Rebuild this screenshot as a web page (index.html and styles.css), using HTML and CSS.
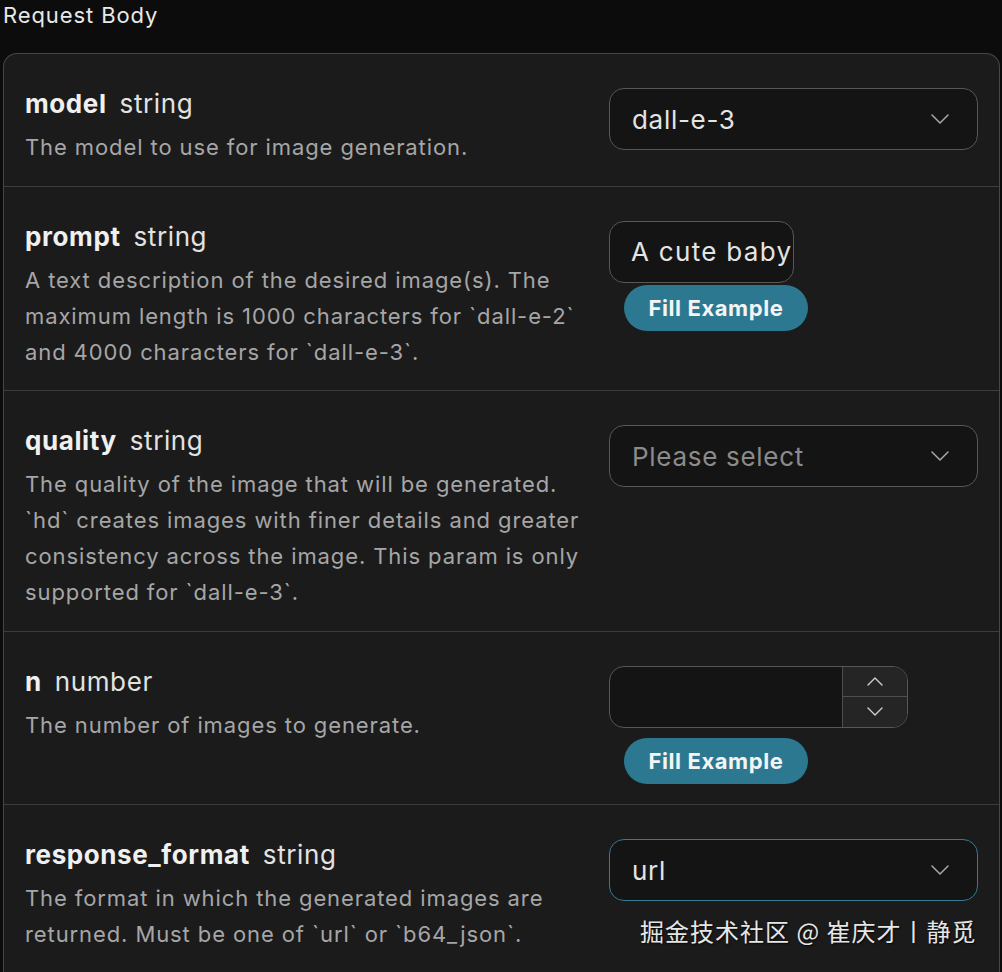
FILE: index.html
```html
<!DOCTYPE html>
<html lang="en">
<head>
<meta charset="utf-8">
<title>Request Body</title>
<link rel="stylesheet" href="styles.css">
</head>
<body>
<div class="page">
  <div class="heading">Request Body</div>
  <div class="card">
    <div class="row">
      <div class="info">
        <div class="title"><span class="name">model</span><span class="type">string</span></div>
        <div class="desc">The model to use for image generation.</div>
      </div>
      <div class="control">
        <div class="select">
          <span class="value">dall-e-3</span>
          <svg class="chev" viewBox="0 0 18 10" width="18" height="10"><path d="M1 1l8 8 8-8" fill="none" stroke="#a9a9a9" stroke-width="1.5" stroke-linecap="round" stroke-linejoin="round"/></svg>
        </div>
      </div>
    </div>
    <div class="row">
      <div class="info">
        <div class="title"><span class="name">prompt</span><span class="type">string</span></div>
        <div class="desc">A text description of the desired image(s). The maximum length is 1000 characters for `dall-e-2` and 4000 characters for `dall-e-3`.</div>
      </div>
      <div class="control">
        <input class="input short" type="text" value="A cute baby sea otter">
        <button class="fill">Fill Example</button>
      </div>
    </div>
    <div class="row">
      <div class="info">
        <div class="title"><span class="name">quality</span><span class="type">string</span></div>
        <div class="desc">The quality of the image that will be generated. `hd` creates images with finer details and greater consistency across the image. This param is only supported for `dall-e-3`.</div>
      </div>
      <div class="control">
        <div class="select">
          <span class="value placeholder">Please select</span>
          <svg class="chev" viewBox="0 0 18 10" width="18" height="10"><path d="M1 1l8 8 8-8" fill="none" stroke="#a9a9a9" stroke-width="1.5" stroke-linecap="round" stroke-linejoin="round"/></svg>
        </div>
      </div>
    </div>
    <div class="row">
      <div class="info">
        <div class="title"><span class="name">n</span><span class="type">number</span></div>
        <div class="desc">The number of images to generate.</div>
      </div>
      <div class="control">
        <div class="number">
          <div class="num-field"></div>
          <div class="spin">
            <div class="spin-btn"><svg viewBox="0 0 16 9" width="16" height="9"><path d="M1 8l7-7 7 7" fill="none" stroke="#cfcfcf" stroke-width="1.4" stroke-linecap="round" stroke-linejoin="round"/></svg></div>
            <div class="spin-btn"><svg viewBox="0 0 16 9" width="16" height="9"><path d="M1 1l7 7 7-7" fill="none" stroke="#cfcfcf" stroke-width="1.4" stroke-linecap="round" stroke-linejoin="round"/></svg></div>
          </div>
        </div>
        <button class="fill spaced">Fill Example</button>
      </div>
    </div>
    <div class="row last">
      <div class="info">
        <div class="title"><span class="name">response_format</span><span class="type">string</span></div>
        <div class="desc">The format in which the generated images are returned. Must be one of `url` or `b64_json`.</div>
      </div>
      <div class="control">
        <div class="select focus">
          <span class="value">url</span>
          <svg class="chev" viewBox="0 0 18 10" width="18" height="10"><path d="M1 1l8 8 8-8" fill="none" stroke="#a9a9a9" stroke-width="1.5" stroke-linecap="round" stroke-linejoin="round"/></svg>
        </div>
      </div>
    </div>
  </div>
  <div class="watermark">掘金技术社区 @ 崔庆才丨静觅</div>
</div>
</body>
</html>
```
FILE: styles.css
```css
html, body {
  margin: 0;
  padding: 0;
  background: #0c0c0c;
  overflow: hidden;
  height: 972px;
}
body {
  font-family: Inter, "Noto Sans", sans-serif;
  color: #e6e6e6;
}
.page {
  position: relative;
  padding: 0 2px 0 3px;
  height: 972px;
  overflow: hidden;
}
.heading {
  font-size: 22px;
  letter-spacing: 0.9px;
  line-height: 30px;
  color: #e8e8e8;
  height: 53px;
}
.card {
  background: #1b1b1c;
  border: 1px solid #474747;
  border-bottom: none;
  border-radius: 14px 14px 0 0;
}
.row {
  display: grid;
  grid-template-columns: 1fr 369px;
  column-gap: 19px;
  padding: 34px 21px 20.5px;
  border-bottom: 1px solid #3c3c3c;
  align-items: start;
}
.row.last {
  padding-bottom: 20px;
}
.title {
  display: flex;
  align-items: baseline;
  gap: 13px;
  line-height: 32px;
}
.name {
  font-weight: 700;
  font-size: 26px;
  letter-spacing: 0.6px;
  color: #f0f0f0;
}
.type {
  font-size: 26px;
  letter-spacing: 0.6px;
  color: #e2e2e2;
}
.desc {
  margin-top: 9px;
  font-size: 22px;
  letter-spacing: 0.9px;
  line-height: 36px;
  color: #a6a6a6;
}
.control {
  display: flex;
  flex-direction: column;
  align-items: flex-start;
}
.select {
  box-sizing: border-box;
  width: 369px;
  height: 62px;
  border: 1px solid #575757;
  border-radius: 15px;
  background: #141415;
  display: flex;
  align-items: center;
  justify-content: space-between;
  padding: 0 28px 0 22px;
}
.select.focus {
  border-color: #347b92;
}
.value {
  font-size: 26px;
  letter-spacing: 0.7px;
  color: #e4e4e4;
}
.value.placeholder {
  color: #8b8b8b;
}
.chev {
  display: block;
}
.input {
  box-sizing: border-box;
  height: 62px;
  border: 1px solid #575757;
  border-radius: 15px;
  background: #141415;
  padding: 0 0 0 21px;
  margin: 0;
  font-family: Inter, "Noto Sans", sans-serif;
  font-size: 26px;
  letter-spacing: 1.3px;
  color: #e4e4e4;
  outline: none;
}
.input.short {
  width: 185px;
}
.fill {
  margin: 2px 0 0 15px;
  width: 184px;
  height: 46px;
  border: none;
  border-radius: 23px;
  background: #2b7890;
  color: #f4f4f4;
  font-family: Inter, "Noto Sans", sans-serif;
  font-weight: 700;
  font-size: 22px;
  letter-spacing: 0.6px;
  padding: 0;
}
.fill.spaced {
  margin-top: 10px;
}
.number {
  box-sizing: border-box;
  width: 299px;
  height: 62px;
  border: 1px solid #575757;
  border-radius: 15px;
  background: #141415;
  display: flex;
  overflow: hidden;
}
.num-field {
  flex: 1;
}
.spin {
  width: 64px;
  border-left: 1px solid #4e4e4e;
  display: flex;
  flex-direction: column;
  background: #252526;
}
.spin-btn {
  flex: 1;
  display: flex;
  align-items: center;
  justify-content: center;
}
.spin-btn + .spin-btn {
  border-top: 1px solid #4e4e4e;
}
.spin-btn svg {
  display: block;
}
.watermark {
  position: absolute;
  left: 640px;
  top: 913px;
  font-family: "Noto Sans CJK SC", "Noto Sans", sans-serif;
  font-size: 24px;
  letter-spacing: 1px;
  line-height: 36px;
  color: #e6e6e6;
  text-shadow: 1px 1px 2px rgba(0,0,0,0.8);
  white-space: nowrap;
}
```
